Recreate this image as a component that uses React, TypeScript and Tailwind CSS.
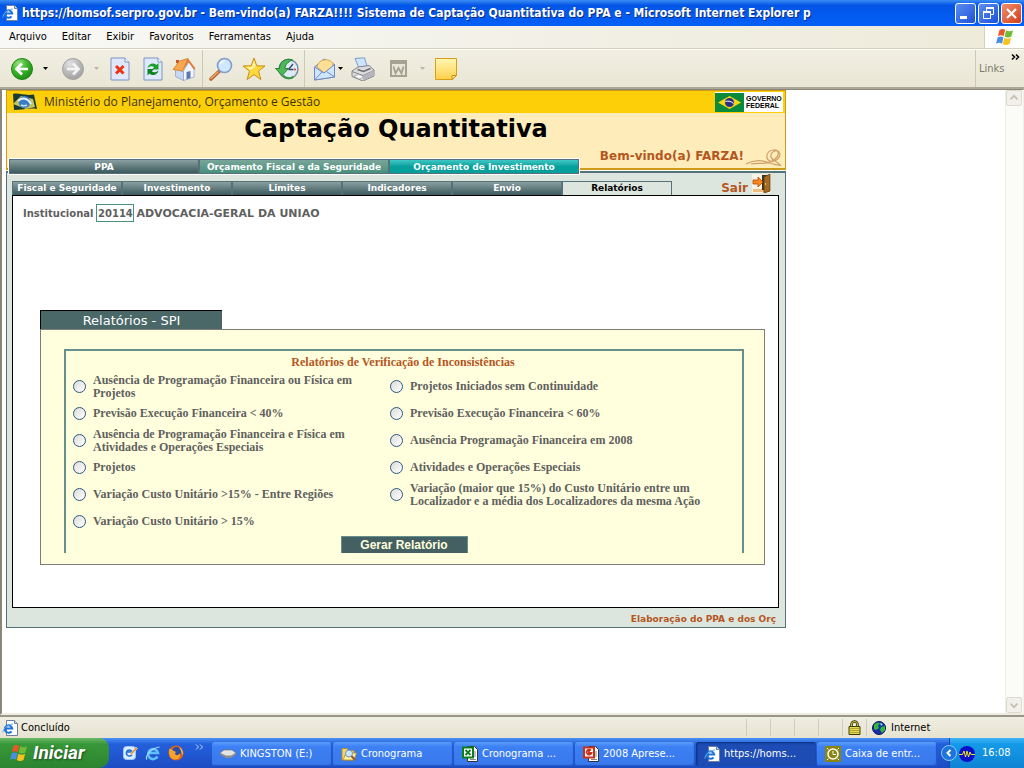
import React, { useState } from 'react';

interface TabItem {
  label: string;
  className: string;
}

interface TaskItem {
  label: string;
  icon: React.ReactNode;
  active?: boolean;
}

const MENUS = ['Arquivo', 'Editar', 'Exibir', 'Favoritos', 'Ferramentas', 'Ajuda'];

const MAIN_TABS: TabItem[] = [
  { label: 'PPA', className: 'bg-linear-to-b from-[#8aa0a2] to-[#3c5a5c]' },
  { label: 'Orçamento Fiscal e da Seguridade', className: 'bg-linear-to-b from-[#7aa69a] to-[#46907c]' },
  { label: 'Orçamento de Investimento', className: 'bg-linear-to-b from-[#3cc8c4] via-[#06a09c] to-[#06a09c]' },
];

const SUB_TABS = ['Fiscal e Seguridade', 'Investimento', 'Limites', 'Indicadores', 'Envio', 'Relatórios'];

// Row by row: left column, right column
const REPORTS = [
  'Ausência de Programação Financeira ou Física em Projetos',
  'Projetos Iniciados sem Continuidade',
  'Previsão Execução Financeira < 40%',
  'Previsão Execução Financeira < 60%',
  'Ausência de Programação Financeira e Física em Atividades e Operações Especiais',
  'Ausência Programação Financeira em 2008',
  'Projetos',
  'Atividades e Operações Especiais',
  'Variação Custo Unitário >15% - Entre Regiões',
  'Variação (maior que 15%) do Custo Unitário entre um Localizador e a média dos Localizadores da mesma Ação',
  'Variação Custo Unitário > 15%',
];

/* ---------- icons ---------- */

function PageIcon({ className = 'w-4 h-4' }: { className?: string }) {
  return (
    <svg viewBox="0 0 16 16" className={className}>
      <path d="M4.500.5h8l3 3v12h-11z" fill="#fff" stroke="#6f7f9f" />
      <path d="M12.500.5v3h3" fill="#cfd8ea" stroke="#6f7f9f" />
      <path d="M9.500 11.300A3.700 3.700 0 1 1 10.200 8.500H3.500" fill="none" stroke="#1d72d8" strokeWidth="2" />
      <path d="M1 12.500C.5 9.500 5 4.500 11 4" fill="none" stroke="#5fb0f4" />
    </svg>
  );
}

function ExplorerIcon() {
  return (
    <svg viewBox="0 0 16 16" className="w-4 h-4">
      <path d="M12.500 11.500A5 5 0 1 1 13 8H4" fill="none" stroke="#5cc0ff" strokeWidth="2.600" />
      <path d="M2 14.500C-.5 12 6 3 14.500 2" fill="none" stroke="#a8dcff" strokeWidth="1.200" />
    </svg>
  );
}

function WindowsFlag({ className = 'w-5 h-5' }: { className?: string }) {
  return (
    <svg viewBox="0 0 20 20" className={className}>
      <path d="M4.500 3C6.500 1.500 8.500 1.600 10.200 2.800L8.700 9.200C7 8 5 8 2.900 9.300z" fill="#e8562a" />
      <path d="M11.200 3.200c2 1.300 4.300 1.300 6.800 0l-1.600 6.400c-2.400 1.300-4.800 1.200-6.800 0z" fill="#6ebb34" />
      <path d="M2.600 10.400c2-1.300 4.100-1.300 5.900-.1L7 16.700c-1.800-1.200-4-1.200-6 .1z" fill="#4a8ee4" />
      <path d="M9.400 10.800c2 1.200 4.300 1.300 6.700 0l-1.600 6.300c-2.300 1.300-4.700 1.200-6.700-.1z" fill="#f8c21c" />
    </svg>
  );
}

function ArrowBall({ back = false }: { back?: boolean }) {
  return (
    <svg viewBox="0 0 24 24" className="w-6 h-6">
      <defs>
        <radialGradient id={back ? 'ballGreen' : 'ballGray'} cx="35%" cy="25%" r="80%">
          <stop offset="0" stopColor={back ? '#9be283' : '#e2e2e2'} />
          <stop offset=".5" stopColor={back ? '#3db52a' : '#bdbdbd'} />
          <stop offset="1" stopColor={back ? '#1d8a14' : '#9f9f9f'} />
        </radialGradient>
      </defs>
      <circle cx="12" cy="12" r="10.500" fill={back ? 'url(#ballGreen)' : 'url(#ballGray)'} stroke={back ? '#22831a' : '#a2a2a2'} />
      {back ? (
        <path d="M18 12H7M12 6.500 6.500 12l5.500 5.500" fill="none" stroke="#fff" strokeWidth="2.600" />
      ) : (
        <path d="M6 12h11M12 6.500l5.500 5.500-5.500 5.500" fill="none" stroke="#f4f4f4" strokeWidth="2.600" />
      )}
    </svg>
  );
}

function Caret({ muted = false }: { muted?: boolean }) {
  return (
    <svg viewBox="0 0 5 3" className="w-[5px] h-[3px]">
      <path d="M0 0h5L2.500 3z" fill={muted ? '#b8b5a8' : '#000'} />
    </svg>
  );
}

function StopIcon() {
  return (
    <svg viewBox="0 0 20 24" className="w-5 h-6">
      <path d="M1 1h14l4 4v18H1z" fill="#dfe9fb" stroke="#7d93c4" />
      <path d="M15 1v4h4" fill="#fff" stroke="#7d93c4" />
      <path d="M6 9l7.500 7.500M13.500 9L6 16.500" stroke="#ee3414" strokeWidth="3" />
    </svg>
  );
}

function RefreshIcon() {
  return (
    <svg viewBox="0 0 20 24" className="w-5 h-6">
      <path d="M1 1h14l4 4v18H1z" fill="#dfe9fb" stroke="#7d93c4" />
      <path d="M15 1v4h4" fill="#fff" stroke="#7d93c4" />
      <path d="M4.500 11C5.500 6.500 10.500 5 13.500 8l2-2v6.500H9l2.200-2.200C9.500 8.500 6.500 9 4.500 11z" fill="#18a02a" />
      <path d="M15.500 13.500c-1 4.500-6 6-9 3l-2 2V12h6.500l-2.200 2.200c1.700 1.800 4.700 1.300 6.700-.7z" fill="#0c8220" />
    </svg>
  );
}

function HomeIcon() {
  return (
    <svg viewBox="0 0 24 24" className="w-6 h-6">
      <path d="M4 6V3h3v4z" fill="#c9542c" />
      <path d="M3.500 11v8.500l8 4V15z" fill="#c9d8f2" stroke="#8a9cc4" strokeWidth=".7" />
      <path d="M11.500 14l5.500-9 5 7v8l-10.500 3.500z" fill="#f2f6ff" stroke="#8a9cc4" strokeWidth=".7" />
      <path d="M1 12.500L7.500 4 16 1.500 10.500 14z" fill="#f8a850" stroke="#d77a24" strokeWidth=".8" />
      <path d="M16 1.500l7.500 10-1.500 1.300L16.500 5 10.500 14z" fill="#dd7b34" />
      <path d="M14.500 15l4-1v7l-4 1.200z" fill="#5a76b4" />
    </svg>
  );
}

function SearchIcon() {
  return (
    <svg viewBox="0 0 24 24" className="w-6 h-6">
      <path d="M2 22l8.500-8" stroke="#b3642e" strokeWidth="3.600" strokeLinecap="round" />
      <path d="M2 21.500l7-6.500" stroke="#f0a868" strokeWidth="1.400" strokeLinecap="round" />
      <circle cx="15.500" cy="8.500" r="7" fill="#cfe8ff" stroke="#7f9bd0" strokeWidth="1.600" />
      <path d="M10.500 8a5 5 0 0 1 6-4.500C14 5 12 6.500 10.500 8z" fill="#fff" />
    </svg>
  );
}

function StarIcon() {
  return (
    <svg viewBox="0 0 24 24" className="w-6 h-6">
      <path d="M12 1l2.800 7.800 8.200.2-6.500 5.100 2.400 8.400L12 17.600l-6.900 4.900 2.400-8.400L1 9l8.200-.2z" fill="#ffd83c" stroke="#c98e10" strokeLinejoin="round" />
      <path d="M12 3.500l1.900 6-5.400 3.600L4 10l5.800-.3z" fill="#fff3a0" />
    </svg>
  );
}

function HistoryIcon() {
  return (
    <svg viewBox="0 0 24 24" className="w-6 h-6">
      <circle cx="13.500" cy="12" r="9.500" fill="#dce9f6" stroke="#7b8ca0" strokeWidth="1.500" />
      <path d="M13.500 12.500L18 7M13.500 12.500h5" stroke="#3a4a64" strokeWidth="1.300" />
      <circle cx="20" cy="12.500" r="1" fill="#e23a1c" />
      <path d="M17.500 3C11 .5 4.500 4.500 4.500 11.500H.5L7 18.500l6.500-7H10C10 8 12.500 5 17.500 3z" fill="#4cb856" stroke="#1d7c2c" strokeWidth=".9" />
      <path d="M8 18.500c3 3.500 7.500 3.500 10.500 1" fill="none" stroke="#2f9a3c" strokeWidth="2" />
    </svg>
  );
}

function MailIcon() {
  return (
    <svg viewBox="0 0 24 24" className="w-6 h-6">
      <path d="M1.500 10L11 2l10.500 5.500V20L1.500 23z" fill="#b9d3fa" stroke="#6f86c8" />
      <path d="M4 10C5 3.500 13-.5 20 6v6l-8.500 4z" fill="#ffdf94" stroke="#d9a04a" strokeWidth=".9" />
      <path d="M1.500 10L11 16l10.500-8.500V20L1.500 23z" fill="#cfe6ff" stroke="#6f86c8" />
      <path d="M1.500 23L9 15M21.500 20L13.500 14.500" stroke="#6f86c8" />
    </svg>
  );
}

function PrintIcon() {
  return (
    <svg viewBox="0 0 24 24" className="w-6 h-6">
      <path d="M4 1.500L13.500.8 16.500 11H8z" fill="#cfe4ff" stroke="#7d9ad4" />
      <path d="M1 14l6-4 11-1.500 5 4.500v6l-11 5-11-4.500z" fill="#dcdcdf" stroke="#84848c" />
      <path d="M1 14.500l11 4 11-5" fill="none" stroke="#84848c" />
      <path d="M12 18.500v5l11-5v-5z" fill="#b4b4ba" />
      <path d="M6.500 12.500l6 2 7-3" fill="none" stroke="#6a6a72" strokeWidth="1.500" />
      <path d="M3 19l5-1.500 5 2.500-5 2z" fill="#fff" stroke="#9a9aa2" strokeWidth=".7" />
    </svg>
  );
}

function EditIcon() {
  return (
    <svg viewBox="0 0 17 17" className="w-[17px] h-[17px]">
      <path d="M1 1h15v15H1z" fill="#e9e6d9" stroke="#a5a294" strokeWidth="2" />
      <path d="M2 3h13" stroke="#a5a294" strokeWidth="2" />
      <path d="M3.500 6.500l2 7L8.500 8l3 5.500 2-7" fill="none" stroke="#a5a294" strokeWidth="1.800" />
    </svg>
  );
}

function NoteIcon() {
  return (
    <svg viewBox="0 0 24 24" className="w-6 h-6">
      <defs>
        <linearGradient id="note" x1="0" y1="0" x2="0" y2="1">
          <stop offset="0" stopColor="#fff7b4" />
          <stop offset="1" stopColor="#ffcf4a" />
        </linearGradient>
      </defs>
      <path d="M1.500 1.500h21v17l-4 4h-17z" fill="url(#note)" stroke="#d9a017" />
      <path d="M18 22.500V18.500h4.500z" fill="#fff3ac" stroke="#c78d0a" />
    </svg>
  );
}

function BrazilFlag() {
  return (
    <svg viewBox="0 0 29 19" className="w-[29px] h-[19px]">
      <path d="M0 0h29v19H0z" fill="#0a8a3c" />
      <path d="M3 9.500L14.500 3 26 9.500 14.500 16z" fill="#f9d616" />
      <circle cx="14.500" cy="9.500" r="4.500" fill="#2a2f86" />
      <path d="M10.500 8.500c3-1 6 0 8 2" fill="none" stroke="#fff" />
    </svg>
  );
}

function MinistryLogo() {
  return (
    <svg viewBox="0 0 26 18" className="w-[26px] h-[18px]">
      <path d="M1 1c6-1.500 11 2 21 .5L25 16c-8-1.500-14 1-23 1z" fill="#1c3a35" />
      <path d="M1 11L9 3l12 3 2 8-9 2z" fill="#c8c45c" />
      <circle cx="12.500" cy="9" r="6" fill="#3a7ec4" />
      <path d="M6 8c4-4 10-3 13 3" fill="none" stroke="#e8f4ff" strokeWidth="2" />
      <path d="M9 12c2 1 4 1 6 0" stroke="#bfe0f8" strokeWidth="1.500" fill="none" />
    </svg>
  );
}

function Flourish() {
  return (
    <svg viewBox="0 0 38 20" className="h-5 w-[38px]">
      <path
        d="M1 16c7-4 15-4 21-2 5 1.500 9 4 14 3M6 16c9-2 16 2 24-5 6-5 3-10-2-9-7 1-8 9-3 11 6 2 12-5 9-9-3-3-9 0-8 5 1 4 7 4 10 9"
        fill="none"
        stroke="#d0a068"
        strokeWidth="1.200"
      />
    </svg>
  );
}

function DoorIcon() {
  return (
    <svg viewBox="0 0 19 19" className="w-[19px] h-[19px]">
      <path d="M0 0h19v19H0z" fill="#fbf3e6" />
      <path d="M1 15h17v3H1z" fill="#f0bd7c" />
      <path d="M10 1h6v15h-6z" fill="#3c3020" />
      <path d="M12 3l6-3v17l-6 2z" fill="#a36a24" stroke="#6a4010" strokeWidth=".8" />
      <path d="M1 6h5V3l5 5-5 5v-3H1z" fill="#f58a1c" stroke="#b8480c" strokeWidth=".8" />
      <circle cx="13.500" cy="10" r=".8" fill="#f8dc6c" />
    </svg>
  );
}

function LockIcon() {
  return (
    <svg viewBox="0 0 13 15" className="w-[13px] h-[15px]">
      <path d="M3.500 7V4.500a3 3 0 0 1 6 0V7" fill="none" stroke="#3c3c00" strokeWidth="2.600" />
      <path d="M3.500 7V4.500a3 3 0 0 1 6 0V7" fill="none" stroke="#d8d054" />
      <path d="M1 6.500h11v8H1z" fill="#e4da50" stroke="#3c3c00" />
      <path d="M2 8.500h9M2 10.500h9M2 12.500h9" stroke="#b0a630" />
    </svg>
  );
}

function GlobeIcon() {
  return (
    <svg viewBox="0 0 14 14" className="w-3.5 h-3.5">
      <circle cx="7" cy="7" r="6.500" fill="#1c2ca8" stroke="#0a1450" />
      <path d="M2 4c2-3 5-3 6-2L6 5l1 2-3 2-2-1zM9 6l4-1v4l-3 3-2-3z" fill="#30b838" />
      <path d="M8 2l3 1-2 2z" fill="#8ce8f0" />
    </svg>
  );
}

function DesktopIcon() {
  return (
    <svg viewBox="0 0 16 16" className="w-4 h-4">
      <rect x="1.500" y="1.500" width="12" height="13" rx="3" fill="#dcecff" stroke="#9cc4ff" />
      <path d="M10 9.500a3 3 0 1 1 .2-2.500H5" fill="none" stroke="#1f6fd0" strokeWidth="1.600" />
      <path d="M8 9l6-7 1.500 1.500L9.500 10z" fill="#e88a24" stroke="#fff" strokeWidth=".5" />
    </svg>
  );
}

function FirefoxIcon() {
  return (
    <svg viewBox="0 0 16 16" className="w-4 h-4">
      <circle cx="8" cy="8" r="7.500" fill="#e0601a" />
      <circle cx="8.500" cy="6.800" r="4.800" fill="#2b4ea8" />
      <path d="M1 4c3-.5 4 1 4.500 2 2 0 3 1 1.500 2.500C7.500 11 11 10.500 12 8c1 3-1 6.500-5 6.500S.5 11 1 4z" fill="#f8a22c" />
      <path d="M11 2c3 1.500 4.500 5 3.500 8C13.500 7 13 5 11 2z" fill="#ffd34c" />
    </svg>
  );
}

function DriveIcon() {
  return (
    <svg viewBox="0 0 16 16" className="w-4 h-4">
      <path d="M0 7l4-3h8l4 3-5 4H6z" fill="#e4e4e4" stroke="#777" strokeWidth=".7" />
      <path d="M0 7l6 2.500h5L16 7v1.500L11 12H6L0 8.500z" fill="#8c8c8c" />
    </svg>
  );
}

function FolderIcon() {
  return (
    <svg viewBox="0 0 16 16" className="w-4 h-4">
      <path d="M1 2.500h5l1.500 2H13V14H1z" fill="#f6d468" stroke="#b98a1c" strokeWidth=".8" />
      <path d="M2 14l3-7h10.500L13 14z" fill="#fff0a4" stroke="#b98a1c" strokeWidth=".8" />
      <circle cx="8" cy="7.500" r="3.500" fill="#c8e8fc" stroke="#6a94c4" />
      <path d="M10.500 10l3.500 4" stroke="#9a5a24" strokeWidth="2" />
    </svg>
  );
}

function OfficeIcon({ color, mark }: { color: string; mark: string }) {
  return (
    <svg viewBox="0 0 16 16" className="w-4 h-4">
      <path d="M5.500.5h7l3 3v12h-10z" fill="#fff" stroke="#333" />
      <path d="M12 6h2M12 8h2M12 10h2M8 13.500h6" stroke="#888" />
      <path d="M1 1.500h10v10H1z" fill="#fff" stroke={color} strokeWidth="2" />
      <path d={mark} fill="none" stroke={color} strokeWidth="1.800" />
    </svg>
  );
}

function OutlookIcon() {
  return (
    <svg viewBox="0 0 16 16" className="w-4 h-4">
      <path d="M0 0h16v16H0z" fill="#8a8410" />
      <circle cx="8" cy="8" r="5" fill="none" stroke="#fff" strokeWidth="1.500" />
      <path d="M8 5v3.500h3M2 2l1.500 1.500M14 2l-1.500 1.500M2 14l1.500-1.500M14 14l-1.500-1.500" fill="none" stroke="#fff" />
    </svg>
  );
}

function WaveIcon() {
  return (
    <svg viewBox="0 0 16 16" className="w-4 h-4">
      <circle cx="8" cy="8" r="8" fill="#0a10c8" />
      <path d="M0 8.500h3.500L5 5l1.500 6L8 5l1.500 6L11 6l1 2.500h4" fill="none" stroke="#f4e41c" />
    </svg>
  );
}

/* ---------- browser chrome ---------- */

const TASKS: TaskItem[] = [
  { label: 'KINGSTON (E:)', icon: <DriveIcon /> },
  { label: 'Cronograma', icon: <FolderIcon /> },
  { label: 'Cronograma ...', icon: <OfficeIcon color="#0c7c1c" mark="M3.500 4l5 5M8.500 4l-5 5" /> },
  { label: '2008 Aprese...', icon: <OfficeIcon color="#c8301c" mark="M8 4.500A2.500 2.500 0 1 0 8.500 7H6V4" /> },
  { label: 'https://homs...', icon: <PageIcon />, active: true },
  { label: 'Caixa de entr...', icon: <OutlookIcon /> },
];

function TitleBar() {
  return (
    <header className="flex h-[26px] items-center gap-1 bg-linear-to-b from-[#3a8cf4] via-[#0255e6] via-20% to-[#0560f8] pr-[2px] pl-[2px]">
      <PageIcon />
      <h1 className="min-w-0 flex-1 truncate text-[12px] leading-[26px] font-bold text-white [text-shadow:1px_1px_0_#0a2a80]">
        https://homsof.serpro.gov.br - Bem-vindo(a) FARZA!!!! Sistema de Captação Quantitativa do PPA e - Microsoft Internet Explorer p
      </h1>
      <div className="flex gap-[2px]">
        <button type="button" aria-label="Minimizar" className="h-[21px] w-[21px] rounded-[3px] border border-white bg-linear-to-br from-[#5c8cf0] to-[#1c50d8]">
          <svg viewBox="0 0 19 19" className="h-full w-full">
            <path d="M4 12h7v3H4z" fill="#fff" />
          </svg>
        </button>
        <button type="button" aria-label="Restaurar" className="h-[21px] w-[21px] rounded-[3px] border border-white bg-linear-to-br from-[#5c8cf0] to-[#1c50d8]">
          <svg viewBox="0 0 19 19" className="h-full w-full">
            <path d="M7.500 7V4.500h7v6H12M4.500 8.500h7v6h-7z" fill="none" stroke="#fff" />
            <path d="M7 4h8M4 8h8" stroke="#fff" strokeWidth="2" />
          </svg>
        </button>
        <button type="button" aria-label="Fechar" className="h-[21px] w-[21px] rounded-[3px] border border-white bg-linear-to-br from-[#f08c6c] to-[#d03c14]">
          <svg viewBox="0 0 19 19" className="h-full w-full">
            <path d="M5 5l9 9M14 5l-9 9" stroke="#fff" strokeWidth="2.200" />
          </svg>
        </button>
      </div>
    </header>
  );
}

function MenuBar() {
  return (
    <nav className="flex h-[23px] items-stretch border-b border-[#d5d1bd] bg-linear-to-r from-[#f8f8f6] to-[#edead9] text-[11px]">
      <div className="flex flex-1 items-center gap-[15px] pt-px pl-[9px]">
        {MENUS.map((menu) => (
          <button key={menu} type="button">
            {menu}
          </button>
        ))}
      </div>
      <div className="flex w-[40px] items-center justify-center border-l border-[#d5d1bd] bg-white">
        <WindowsFlag />
      </div>
    </nav>
  );
}

function ToolButton({ label, className, children }: { label: string; className: string; children: React.ReactNode }) {
  return (
    <button type="button" aria-label={label} className={`flex shrink-0 items-center justify-center ${className}`}>
      {children}
    </button>
  );
}

function Toolbar() {
  return (
    <div className="flex h-[40px] items-stretch border-t border-b-2 border-t-white border-b-[#aca899] bg-linear-to-b from-[#f1efe2] to-[#e9e6d5] pl-1 text-[11px]">
      <ToolButton label="Voltar" className="w-[36px]"><ArrowBall back /></ToolButton>
      <ToolButton label="Histórico de voltar" className="w-[10px]"><Caret /></ToolButton>
      <ToolButton label="Avançar" className="ml-[3px] w-[40px]"><ArrowBall /></ToolButton>
      <ToolButton label="Histórico de avançar" className="w-[6px]"><Caret muted /></ToolButton>
      <ToolButton label="Parar" className="w-[42px]"><StopIcon /></ToolButton>
      <ToolButton label="Atualizar" className="w-[24px]"><RefreshIcon /></ToolButton>
      <ToolButton label="Página inicial" className="w-[37px]"><HomeIcon /></ToolButton>
      <span className="w-px bg-[#cdc9b4]" />
      <ToolButton label="Pesquisar" className="w-[36px]"><SearchIcon /></ToolButton>
      <ToolButton label="Favoritos" className="w-[30px]"><StarIcon /></ToolButton>
      <ToolButton label="Histórico" className="w-[35px]"><HistoryIcon /></ToolButton>
      <span className="w-px bg-[#cdc9b4]" />
      <ToolButton label="Correio" className="ml-2 w-[24px]"><MailIcon /></ToolButton>
      <ToolButton label="Opções de correio" className="w-[6px]"><Caret /></ToolButton>
      <ToolButton label="Imprimir" className="w-[40px]"><PrintIcon /></ToolButton>
      <ToolButton label="Editar" className="w-[31px]"><EditIcon /></ToolButton>
      <ToolButton label="Opções de edição" className="w-[16px]"><Caret muted /></ToolButton>
      <ToolButton label="Discutir" className="w-[31px]"><NoteIcon /></ToolButton>
      <div className="ml-auto flex w-[49px] justify-between border-l border-[#cdc9b4] pr-1 pl-[3px]">
        <span className="self-center pt-[2px] text-[#7d7a6c]">Links</span>
        <button type="button" aria-label="Mais links" className="mt-[4px] h-[6px]">
          <svg viewBox="0 0 9 6" className="h-[6px] w-[9px]">
            <path d="M1 .5L3.500 3 1 5.500M5 .5L7.500 3 5 5.500" fill="none" stroke="#000" strokeWidth="1.500" />
          </svg>
        </button>
      </div>
    </div>
  );
}

function ScrollBar() {
  return (
    <div className="flex w-[18px] flex-col justify-between border-l border-[#f0efe8] bg-[#fbfbf8]">
      {['M4 9.500l4-4 4 4', 'M4 6.500l4 4 4-4'].map((d) => (
        <button
          key={d}
          type="button"
          disabled
          aria-label="Rolar"
          className="h-4 w-4 rounded-[2px] border border-[#dedbcd] bg-[#f1f0ea]"
        >
          <svg viewBox="0 0 16 16" className="h-full w-full">
            <path d={d} fill="none" stroke="#c4c1b4" strokeWidth="2" />
          </svg>
        </button>
      ))}
    </div>
  );
}

function StatusBar() {
  return (
    <div className="flex h-[23px] items-stretch border-t-2 border-[#9a978a] bg-linear-to-b from-[#f0eee2] to-[#e6e3d2] text-[11px]">
      <div className="flex flex-1 items-center gap-[3px] pt-px pl-[2px]">
        <PageIcon />
        <span>Concluído</span>
      </div>
      <div className="flex items-stretch py-[2px]">
        <span className="w-[24px] border-l border-[#cfccbb]" />
        <span className="w-[24px] border-l border-[#cfccbb]" />
        <span className="w-[24px] border-l border-[#cfccbb]" />
        <span className="w-[24px] border-l border-[#cfccbb]" />
        <span className="flex w-[24px] items-center justify-center border-l border-[#cfccbb]"><LockIcon /></span>
        <span className="flex w-[158px] items-center gap-[5px] border-l border-[#cfccbb] pt-px pl-[5px]">
          <GlobeIcon />
          Internet
        </span>
      </div>
    </div>
  );
}

function TaskBar() {
  return (
    <footer className="flex h-[30px] items-stretch bg-linear-to-b from-[#4a92f4] via-[#2460dc] via-20% to-[#1c4cc4] text-[11px] text-white">
      <button
        type="button"
        className="flex w-[109px] items-center gap-1 rounded-r-[10px] bg-linear-to-b from-[#6cb868] via-[#389838] via-20% to-[#2c8430] pl-[9px] font-[Roboto,sans-serif] text-[19px] font-bold italic [text-shadow:1px_1px_2px_#1c4c1c]"
      >
        <WindowsFlag />
        Iniciar
      </button>
      <div className="flex w-[103px] items-center gap-[7px] pl-[13px]">
        <DesktopIcon />
        <ExplorerIcon />
        <FirefoxIcon />
        <svg viewBox="0 0 9 6" className="mb-3 ml-1 h-[6px] w-[9px]">
          <path d="M1 .5L3.500 3 1 5.500M5 .5L7.500 3 5 5.500" fill="none" stroke="#bcd8ff" />
        </svg>
      </div>
      <div className="flex min-w-0 flex-1 gap-px pt-[4px] pb-[2px]">
        {TASKS.map((task) => (
          <button
            key={task.label}
            type="button"
            className={`flex w-[120px] min-w-0 items-center gap-1 rounded-[3px] pl-2 whitespace-nowrap ${
              task.active
                ? 'bg-[#1c4cb4] shadow-[inset_1px_1px_2px_#0c2c7c]'
                : 'bg-linear-to-b from-[#5c9cfc] via-[#3c80f4] via-20% to-[#3878ec] shadow-[inset_-1px_-1px_1px_#2456c0]'
            }`}
          >
            {task.icon}
            {task.label}
          </button>
        ))}
      </div>
      <div className="relative flex w-[75px] items-center gap-[7px] border-l border-[#0c4ca8] bg-linear-to-b from-[#3cb4f4] via-[#149ae8] via-20% to-[#1084d4] pt-px pl-[9px]">
        <button
          type="button"
          aria-label="Mostrar ícones ocultos"
          className="absolute top-[7px] -left-[9px] h-4 w-4 rounded-full border border-[#8cc8ff] bg-[#1c74dc]"
        >
          <svg viewBox="0 0 14 14" className="h-full w-full">
            <path d="M8.500 4l-3 3 3 3" fill="none" stroke="#fff" strokeWidth="2" />
          </svg>
        </button>
        <WaveIcon />
        <time>16:08</time>
      </div>
    </footer>
  );
}

/* ---------- application page ---------- */

function PageHeader() {
  return (
    <div className="border border-b-2 border-[#cf9a17] bg-[#feedba]">
      <div className="flex h-[22px] items-center bg-[#fdcf08] pr-[2px] pl-[5px]">
        <MinistryLogo />
        <span className="ml-[6px] flex-1 font-['Open_Sans','Noto_Sans',sans-serif] text-[12px] text-[#3c3410]">
          Ministério do Planejamento, Orçamento e Gestão
        </span>
        <div className="flex h-[20px] items-center gap-[2px] bg-white">
          <BrazilFlag />
          <span className="w-[37px] font-['Liberation_Sans',sans-serif] text-[7px] leading-[7px] font-bold">
            GOVERNO FEDERAL
          </span>
        </div>
      </div>
      <h2 className="h-[36px] text-center text-[24px] leading-[32px] font-bold text-black">Captação Quantitativa</h2>
      <div className="-mb-[7px] flex h-[26px] items-end">
        <nav className="relative ml-px flex min-w-0 border border-white">
          {MAIN_TABS.map((tab) => (
            <a
              key={tab.label}
              href="#"
              className={`h-[15px] w-[190px] border border-[#56717a] text-center text-[9px] leading-[14px] font-bold whitespace-nowrap text-white ${tab.className}`}
            >
              {tab.label}
            </a>
          ))}
        </nav>
        <div className="mb-[7px] ml-auto flex items-end gap-px pr-[2px]">
          <span className="text-[12px] leading-[24px] font-bold whitespace-nowrap text-[#b5561f]">Bem-vindo(a) FARZA!</span>
          <Flourish />
        </div>
      </div>
    </div>
  );
}

function SubTabs() {
  return (
    <div className="flex h-[22px] items-end justify-between">
      <nav className="flex">
        {SUB_TABS.map((label) => (
          <a
            key={label}
            href="#"
            className={`h-[14px] w-[110px] border border-b-0 border-[#56717a] text-center text-[9px] leading-[13px] font-bold whitespace-nowrap ${
              label === 'Relatórios' ? 'bg-[#dce6de] text-black' : 'bg-linear-to-b from-[#8aa0a2] to-[#3c5a5c] text-white'
            }`}
          >
            {label}
          </a>
        ))}
      </nav>
      <a href="#" className="mr-2 mb-[2px] flex items-end gap-1 text-[12px] leading-[10px] font-bold text-[#b5561f]">
        Sair
        <DoorIcon />
      </a>
    </div>
  );
}

function ReportForm() {
  const [selected, setSelected] = useState('');

  return (
    <form className="mr-[13px] ml-[27px]" onSubmit={(e) => e.preventDefault()}>
      <h3 className="h-[19px] w-[182px] border-t border-l border-black bg-[#4a6868] text-center text-[13px] leading-[20px] text-white">
        Relatórios - SPI
      </h3>
      <div className="border border-[#7c7c78] bg-[#ffffde] pt-[19px] pr-[20px] pb-[11px] pl-[23px]">
        <div className="border-2 border-b-0 border-[#68908a] font-['Liberation_Serif',serif]">
          <h4 className="pr-[2px] text-center text-[12px] leading-[22px] font-bold text-[#b5561f]">
            Relatórios de Verificação de Inconsistências
          </h4>
          <div className="grid grid-cols-[317px_1fr]">
            {REPORTS.map((report, i) => (
              <div key={report} className="flex h-[27px] items-center gap-[7px] pl-[7px]">
                <input
                  id={`report-${i}`}
                  type="radio"
                  name="report"
                  checked={selected === report}
                  onChange={() => setSelected(report)}
                  className="h-[13px] w-[13px] shrink-0 appearance-none rounded-full border border-[#2c5880] bg-linear-to-br from-[#dcdcd8] to-white checked:bg-[#2c9c2c]"
                />
                <label
                  htmlFor={`report-${i}`}
                  className="max-w-[310px] text-[12px] leading-[13px] font-bold text-[#5f5f5f]"
                >
                  {report}
                </label>
              </div>
            ))}
          </div>
          <button
            type="submit"
            className="mx-auto mt-px block h-[17px] w-[127px] border border-b-0 border-[#68908a] bg-[#446062] font-['Liberation_Sans',sans-serif] text-[12px] leading-[16px] font-bold text-[#ffffde]"
          >
            Gerar Relatório
          </button>
        </div>
      </div>
    </form>
  );
}

function PlanningPage() {
  return (
    <main className="w-full max-w-[780px] font-['DejaVu_Sans',Verdana,sans-serif]">
      <PageHeader />
      <div className="mt-px border border-t-2 border-[#56717a] bg-[#dce6de] pr-[6px] pl-[5px]">
        <SubTabs />
        <section className="min-h-[413px] border border-black bg-white">
          <div className="mb-[88px] flex items-center pt-2 pl-[10px] text-[10px] leading-[15px] font-bold text-[#5f5f5f]">
            <label htmlFor="institution">Institucional</label>
            <input
              id="institution"
              defaultValue="20114"
              className="mr-[2px] ml-[3px] h-[18px] w-[38px] border border-[#46907c] text-center"
            />
            <span className="text-[11px]">ADVOCACIA-GERAL DA UNIAO</span>
          </div>
          <ReportForm />
        </section>
        <p className="pt-[3px] pr-[3px] text-right text-[9px] leading-[16px] font-bold text-[#b5561f]">
          Elaboração do PPA e dos Orç
        </p>
      </div>
    </main>
  );
}

export default function App() {
  return (
    <div className="flex min-h-screen flex-col font-['DejaVu_Sans_Condensed','DejaVu_Sans',Tahoma,sans-serif] text-black">
      <TitleBar />
      <MenuBar />
      <Toolbar />
      <div className="flex flex-1 border-t border-r border-b-2 border-l-2 border-[#8a8678] border-r-[#f0efe8] border-b-[#efede0] bg-white">
        <div className="min-w-0 flex-1 pl-1">
          <PlanningPage />
        </div>
        <ScrollBar />
      </div>
      <StatusBar />
      <TaskBar />
    </div>
  );
}
